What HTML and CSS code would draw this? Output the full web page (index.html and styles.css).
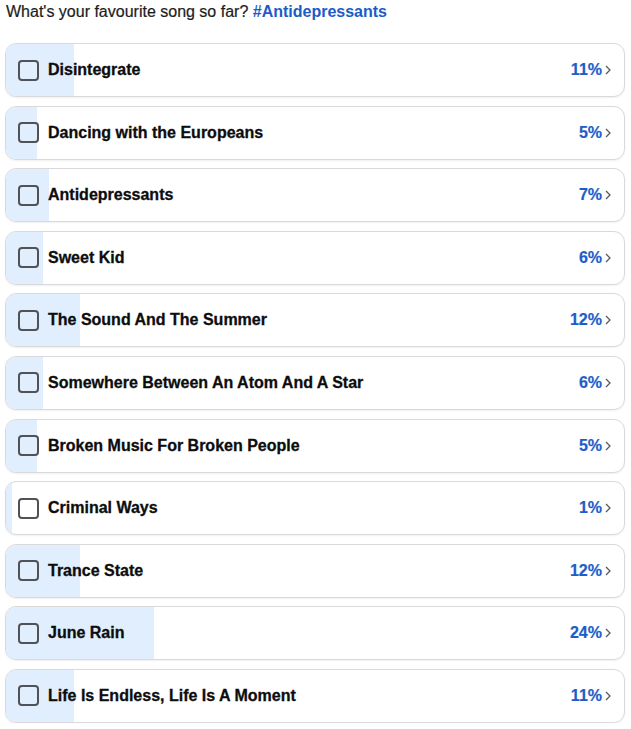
FILE: index.html
```html
<!DOCTYPE html>
<html>
<head>
<meta charset="utf-8">
<link rel="stylesheet" href="styles.css">
</head>
<body>
<div class="page">
  <div class="title">What's your favourite song so far? <span class="tag">#Antidepressants</span></div>
  <div class="list">
    <div class="row"><div class="fill" style="width:11%"></div><span class="box"></span><span class="name">Disintegrate</span><span class="pct">11%</span><svg class="chev" viewBox="0 0 6 10"><path d="M1 1l4 4-4 4"/></svg></div>
    <div class="row"><div class="fill" style="width:5%"></div><span class="box"></span><span class="name">Dancing with the Europeans</span><span class="pct">5%</span><svg class="chev" viewBox="0 0 6 10"><path d="M1 1l4 4-4 4"/></svg></div>
    <div class="row"><div class="fill" style="width:7%"></div><span class="box"></span><span class="name">Antidepressants</span><span class="pct">7%</span><svg class="chev" viewBox="0 0 6 10"><path d="M1 1l4 4-4 4"/></svg></div>
    <div class="row"><div class="fill" style="width:6%"></div><span class="box"></span><span class="name">Sweet Kid</span><span class="pct">6%</span><svg class="chev" viewBox="0 0 6 10"><path d="M1 1l4 4-4 4"/></svg></div>
    <div class="row"><div class="fill" style="width:12%"></div><span class="box"></span><span class="name">The Sound And The Summer</span><span class="pct">12%</span><svg class="chev" viewBox="0 0 6 10"><path d="M1 1l4 4-4 4"/></svg></div>
    <div class="row"><div class="fill" style="width:6%"></div><span class="box"></span><span class="name">Somewhere Between An Atom And A Star</span><span class="pct">6%</span><svg class="chev" viewBox="0 0 6 10"><path d="M1 1l4 4-4 4"/></svg></div>
    <div class="row"><div class="fill" style="width:5%"></div><span class="box"></span><span class="name">Broken Music For Broken People</span><span class="pct">5%</span><svg class="chev" viewBox="0 0 6 10"><path d="M1 1l4 4-4 4"/></svg></div>
    <div class="row"><div class="fill" style="width:1%"></div><span class="box"></span><span class="name">Criminal Ways</span><span class="pct">1%</span><svg class="chev" viewBox="0 0 6 10"><path d="M1 1l4 4-4 4"/></svg></div>
    <div class="row"><div class="fill" style="width:12%"></div><span class="box"></span><span class="name">Trance State</span><span class="pct">12%</span><svg class="chev" viewBox="0 0 6 10"><path d="M1 1l4 4-4 4"/></svg></div>
    <div class="row"><div class="fill" style="width:24%"></div><span class="box"></span><span class="name">June Rain</span><span class="pct">24%</span><svg class="chev" viewBox="0 0 6 10"><path d="M1 1l4 4-4 4"/></svg></div>
    <div class="row"><div class="fill" style="width:11%"></div><span class="box"></span><span class="name">Life Is Endless, Life Is A Moment</span><span class="pct">11%</span><svg class="chev" viewBox="0 0 6 10"><path d="M1 1l4 4-4 4"/></svg></div>
  </div>
</div>
</body>
</html>
```
FILE: styles.css
```css
html, body {
  margin: 0;
  padding: 0;
  background: #ffffff;
}
.page {
  padding: 3px 6px 0 5px;
  font-family: "Liberation Sans", Arial, sans-serif;
}
.title {
  font-size: 16px;
  color: #1c1c1c;
  height: 18px;
  line-height: 18px;
  padding-left: 1px;
  -webkit-text-stroke: 0.2px #1c1c1c;
}
.tag {
  color: #1b5cc8;
  font-weight: bold;
  -webkit-text-stroke: 0;
}
.list {
  margin-top: 22px;
  display: flex;
  flex-direction: column;
  gap: 8.6px;
}
.row {
  position: relative;
  height: 54px;
  box-sizing: border-box;
  border: 1.5px solid #d9d9dc;
  border-radius: 11px;
  display: flex;
  align-items: center;
  padding: 0 13px 0 12px;
  overflow: hidden;
  box-shadow: 0 1px 2px rgba(0,0,0,0.06);
}
.fill {
  position: absolute;
  left: 0;
  top: 0;
  bottom: 0;
  background: #e0eefd;
}
.box {
  position: relative;
  width: 17px;
  height: 17px;
  border: 2px solid #4f5257;
  border-radius: 4px;
  flex: none;
}
.name {
  position: relative;
  margin-left: 9px;
  font-size: 16px;
  font-weight: bold;
  color: #0d0d0d;
  flex: 1;
  -webkit-text-stroke: 0.3px #0d0d0d;
}
.pct {
  position: relative;
  font-size: 16px;
  font-weight: bold;
  color: #1c5ec9;
  -webkit-text-stroke: 0.2px #1c5ec9;
}
.chev {
  position: relative;
  width: 6px;
  height: 10px;
  margin-left: 3px;
  fill: none;
  stroke: #5a5a5e;
  stroke-width: 1.3;
}
```
